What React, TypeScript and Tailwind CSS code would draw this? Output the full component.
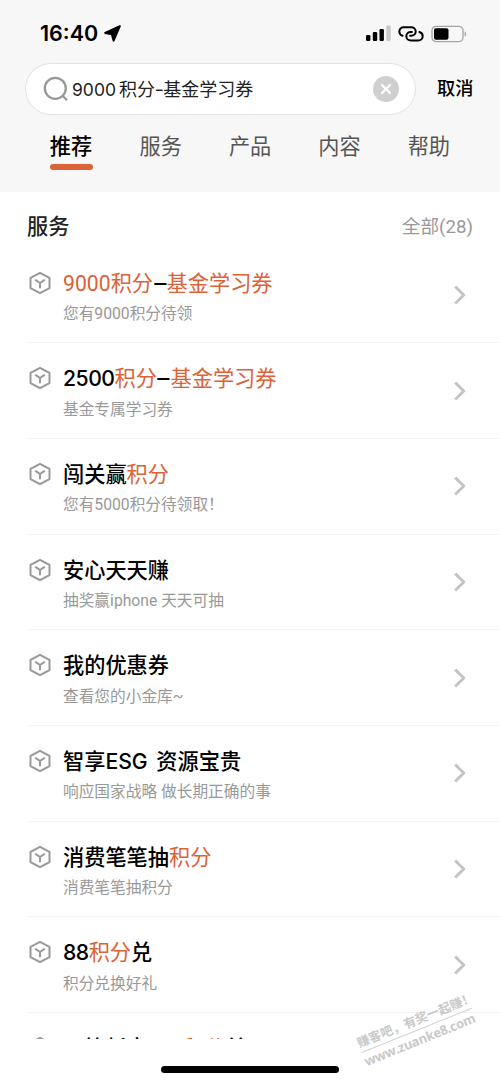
import { ChevronRight, X } from "lucide-react";

type Part = { text: string; hit?: boolean };

type Service = {
  title: Part[];
  desc: string;
};

const tabs = ["推荐", "服务", "产品", "内容", "帮助"];

const services: Service[] = [
  {
    title: [{ text: "9000积分", hit: true }, { text: "–" }, { text: "基金学习券", hit: true }],
    desc: "您有9000积分待领",
  },
  {
    title: [{ text: "2500" }, { text: "积分", hit: true }, { text: "–" }, { text: "基金学习券", hit: true }],
    desc: "基金专属学习券",
  },
  {
    title: [{ text: "闯关赢" }, { text: "积分", hit: true }],
    desc: "您有5000积分待领取！",
  },
  { title: [{ text: "安心天天赚" }], desc: "抽奖赢iphone 天天可抽" },
  { title: [{ text: "我的优惠券" }], desc: "查看您的小金库~" },
  { title: [{ text: "智享ESG 资源宝贵" }], desc: "响应国家战略 做长期正确的事" },
  {
    title: [{ text: "消费笔笔抽" }, { text: "积分", hit: true }],
    desc: "消费笔笔抽积分",
  },
  {
    title: [{ text: "88" }, { text: "积分", hit: true }, { text: "兑" }],
    desc: "积分兑换好礼",
  },
  { title: [{ text: "一笔新客 88" }, { text: "积分", hit: true }, { text: "兑" }], desc: "" },
];

function partClass(part: Part) {
  if (part.hit) return "text-[#dc6238]";
  if (part.text === "–") return "mx-[1.5px] inline-block scale-x-115 font-['Inter',sans-serif] font-medium";
  if (/^\d+$/.test(part.text)) return "font-['Inter',sans-serif] font-medium tracking-[-0.5px]";
  return "font-['Inter','Noto_Sans_CJK_SC',sans-serif] font-medium [word-spacing:3px]";
}

function CubeIcon() {
  return (
    <svg
      viewBox="0 0 22 24"
      className="mt-[23px] h-6 w-[22px] shrink-0"
      fill="none"
      stroke="#999"
      strokeWidth="2"
      strokeLinejoin="round"
      strokeLinecap="round"
    >
      <path d="M11 1.800 20.500 6.900v10.200L11 22.200 1.500 17.100V6.900z" />
      <path d="M6.800 9.200 11 12l4.200-2.800M11 12v4.600" />
    </svg>
  );
}

function StatusBar() {
  return (
    <div className="flex h-[63px] items-start justify-between pt-[20px] pr-[33px] pl-[40px]">
      <div className="flex h-[27px] items-center gap-[6px]">
        <span className="font-['Inter',sans-serif] text-[21.5px] leading-[27px] font-semibold">
          16:40
        </span>
        <svg viewBox="0 0 17 17" className="h-[17px] w-[17px]">
          <path
            d="M15.800 1.200 1.200 7.900 7.800 9.200 9.600 15.700z"
            fill="#000"
            stroke="#000"
            strokeWidth="2"
            strokeLinejoin="round"
          />
        </svg>
      </div>
      <div className="flex h-[27px] items-center">
        <svg viewBox="0 0 26 17" className="h-[17px] w-[26px]">
          <rect x="1" y="10" width="4.400" height="6" rx="1.200" />
          <rect x="7.800" y="7" width="4.400" height="9" rx="1.200" />
          <rect x="14.500" y="4" width="4.400" height="12" rx="1.200" />
          <rect x="21.300" y=".6" width="4.400" height="15.400" rx="1.200" fill="#c9c9c9" />
        </svg>
        <svg
          viewBox="0 0 26 16"
          className="ml-[7px] h-4 w-[26px]"
          fill="none"
          stroke="#000"
          strokeWidth="2"
          strokeLinecap="round"
        >
          <path d="M4.600 9.700C2.300 9.100 1.300 7.300 1.300 5.500 1.300 3 3.200 1.300 5.600 1.300h7.500c2.600 0 4.600 1.700 4.600 4.200 0 2.400-2 4.200-4.600 4.200h-1" />
          <path d="M21.400 6c2.300.600 3.300 2.400 3.300 4.200 0 2.500-1.900 4.200-4.300 4.200h-7.500c-2.600 0-4.600-1.700-4.600-4.200C8.300 7.800 10.300 6 12.900 6h1" />
        </svg>
        <svg viewBox="0 0 36 18" className="ml-[7px] h-[18px] w-9">
          <rect
            x="1"
            y="1.300"
            width="31"
            height="15.400"
            rx="4.200"
            fill="none"
            stroke="#a5a5a5"
            strokeWidth="1.300"
          />
          <rect x="3" y="3.300" width="14.500" height="11.400" rx="2" />
          <path d="M33.600 6.500c2 .600 2 4.400 0 5z" fill="#a5a5a5" />
        </svg>
      </div>
    </div>
  );
}

function SearchBar() {
  return (
    <div className="flex items-center pl-[25px]">
      <div className="flex h-[52px] w-[391px] items-center rounded-full border border-[#e2e2e2] bg-white pr-[16px] pl-[17px]">
        <svg
          viewBox="0 0 26 26"
          className="h-[26px] w-[26px]"
          fill="none"
          stroke="#999"
          strokeWidth="2.300"
        >
          <circle cx="12.300" cy="12.300" r="10.500" />
          <path d="m19.500 19.800 4.500 4.400" />
        </svg>
        <div className="ml-[3px] flex-1 pt-px text-[18px] leading-[26px] whitespace-nowrap text-[#222]">
          <span className="mr-[3px] font-['Inter',sans-serif] text-[17.500px]">9000</span>
          积分
          <span className="inline-block scale-x-115 font-['Inter',sans-serif]">-</span>
          基金学习券
        </div>
        <span className="flex h-[26px] w-[26px] items-center justify-center rounded-full bg-[#d0d0d0]">
          <X size={16} strokeWidth={3.400} color="#fff" />
        </span>
      </div>
      <span className="ml-[21px] text-[18.200px] leading-[26px] font-medium">取消</span>
    </div>
  );
}

function ServiceRow({ item }: { item: Service }) {
  return (
    <div className="flex h-[95.700px] shrink-0 border-b border-[#f3f3f3] pl-[2px]">
      <CubeIcon />
      <div className="mt-[18px] ml-[12px] flex-1 whitespace-nowrap">
        <div className="h-[34px] text-[21.200px] leading-[34px]">
          {item.title.map((part, i) => (
            <span key={i} className={partClass(part)}>
              {part.text}
            </span>
          ))}
        </div>
        <div className="mt-[2.500px] h-[24px] text-[15.700px] leading-[24px] text-[#999]">
          {item.desc}
        </div>
      </div>
      <ChevronRight
        size={30}
        strokeWidth={2.400}
        strokeLinecap="square"
        className="mt-[32.500px] mr-[25px] text-[#c4c4c4]"
      />
    </div>
  );
}

export default function App() {
  return (
    <div className="relative flex h-[1083px] w-[500px] flex-col overflow-hidden bg-white font-['Roboto','Noto_Sans_CJK_SC',sans-serif] text-black">
      <header className="h-[192px] shrink-0 bg-[#f7f7f7]">
        <StatusBar />
        <SearchBar />
        <nav className="flex gap-[47px] pt-[16px] pl-[49.500px]">
          {tabs.map((tab, i) => (
            <div key={tab} className="flex flex-col items-center">
              <span
                className={
                  i === 0
                    ? "text-[21.200px] leading-[32px] font-medium"
                    : "text-[21.200px] leading-[32px] text-[#555]"
                }
              >
                {tab}
              </span>
              {i === 0 && <span className="mt-px h-[6px] w-[43px] rounded-full bg-[#dc6238]" />}
            </div>
          ))}
        </nav>
      </header>

      <main className="flex h-[847px] shrink-0 flex-col overflow-hidden pl-[27px]">
        <div className="flex h-[55.500px] shrink-0 items-center justify-between pt-[13.500px] pr-[27px]">
          <h2 className="text-[21.200px] leading-[32px] font-medium text-[#222]">服务</h2>
          <span className="text-[18.700px] leading-[28px] text-[#999]">全部(28)</span>
        </div>
        {services.map((item, i) => (
          <ServiceRow key={i} item={item} />
        ))}
      </main>

      <div className="mt-[27px] ml-[161px] h-[7px] w-[178px] rounded-full bg-black" />

      <div className="absolute top-[1012px] left-[357px] w-[119px] -rotate-[22deg] font-bold whitespace-nowrap text-[#c9c9c9]">
        <div className="border-b border-[#d2d2d2] text-[12.500px] leading-[18px]">
          赚客吧，有奖一起赚！
        </div>
        <div className="font-['Open_Sans',sans-serif] text-[13px] leading-[18px] tracking-[-0.300px]">
          www.zuanke8.com
        </div>
      </div>
    </div>
  );
}
